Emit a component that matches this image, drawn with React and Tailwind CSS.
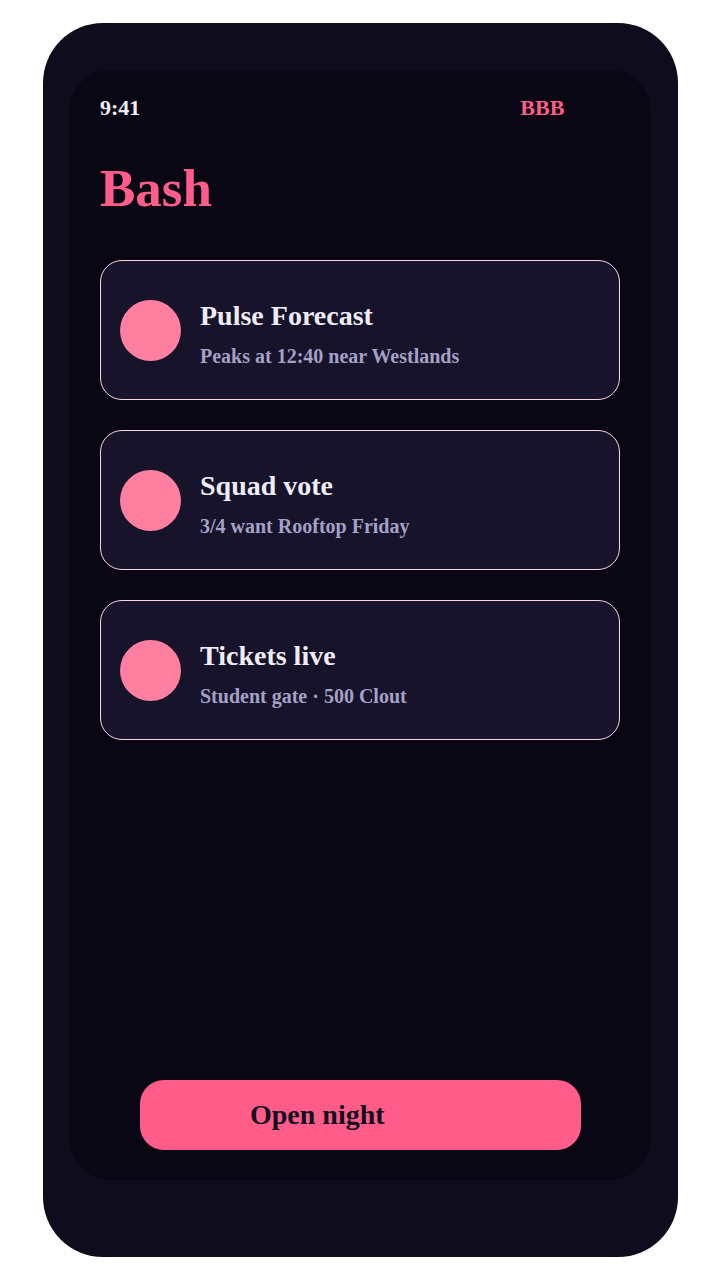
import React from "react";

const cards = [
  { title: "Pulse Forecast", sub: "Peaks at 12:40 near Westlands" },
  { title: "Squad vote", sub: "3/4 want Rooftop Friday" },
  { title: "Tickets live", sub: "Student gate · 500 Clout" },
];

export default function App() {
  return (
    <div className="min-h-screen bg-white pt-[23px] pl-[43px] font-['Liberation_Serif',serif]">
      {/* phone frame */}
      <div className="w-[635px] h-[1234px] rounded-[60px] bg-[#0e0c1d] pt-[47px] pl-[27px]">
        {/* screen */}
        <div className="w-[580px] h-[1110px] rounded-[40px] bg-[#090713] flex flex-col px-[30px]">
          <div className="flex items-center h-[20px] mt-[28px] text-[22px] font-bold leading-none">
            <span className="text-[#f2eff8]">9:41</span>
            <span className="ml-[380px] text-[#ff5c8a]">BBB</span>
          </div>

          <h1 className="mt-[44px] text-[53px] leading-none font-bold text-[#ff5c8a]">Bash</h1>

          <div className="mt-[45px] flex flex-col gap-[30px]">
            {cards.map((c) => (
              <div
                key={c.title}
                className="h-[140px] rounded-[22px] border-[1.5px] border-[#ffd4e2] bg-[#16132b] flex items-center pl-[19px]"
              >
                <div className="w-[61px] h-[61px] rounded-full bg-[#ff7fa0] shrink-0" />
                <div className="ml-[19px] pt-[7px] flex flex-col">
                  <div className="text-[28px] leading-none font-bold text-[#efecf7]">{c.title}</div>
                  <div className="mt-[16px] text-[20px] leading-none font-bold text-[#a5a0c5]">{c.sub}</div>
                </div>
              </div>
            ))}
          </div>

          <button className="mt-auto mb-[30px] ml-[40px] w-[441px] h-[70px] rounded-[24px] bg-[#ff5c8a] text-left pl-[110px] text-[28px] font-bold text-[#120e1e]">
            Open night
          </button>
        </div>
      </div>
    </div>
  );
}
